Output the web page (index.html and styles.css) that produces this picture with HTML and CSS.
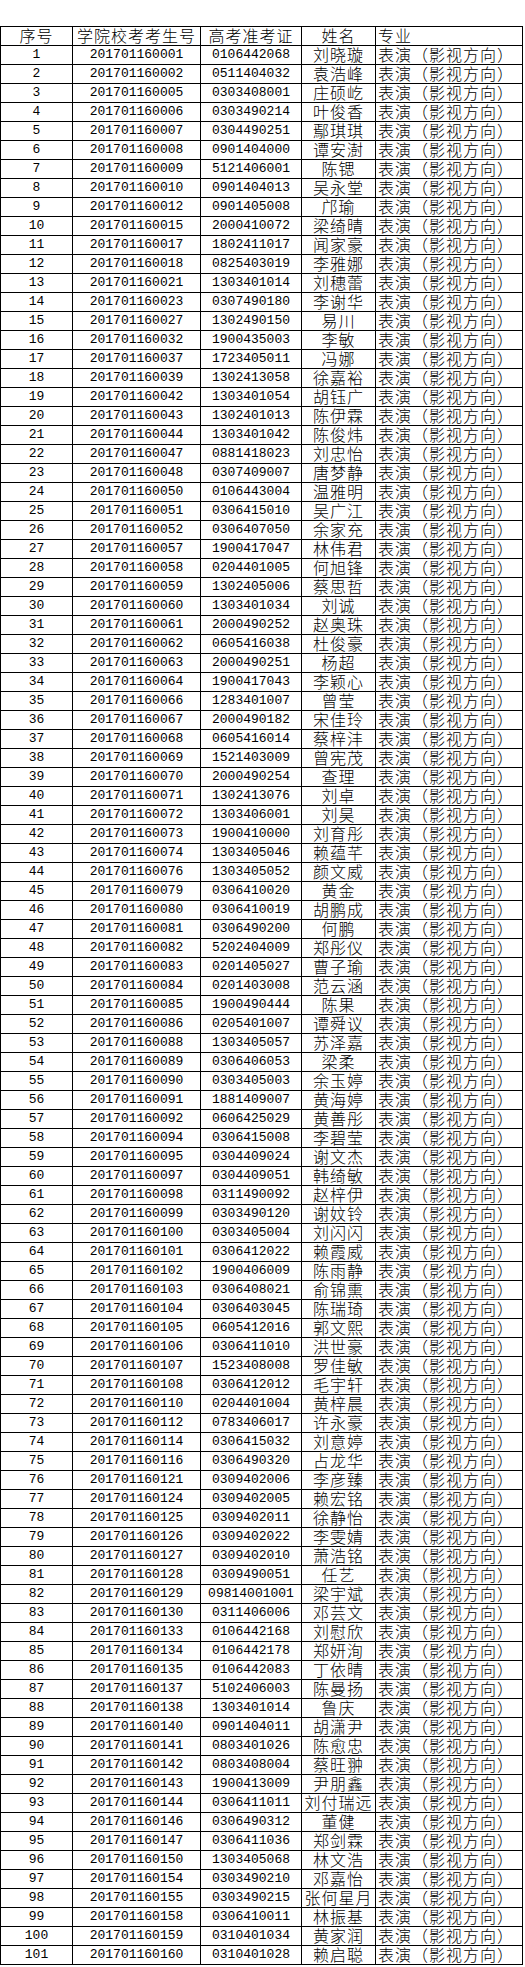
FILE: index.html
```html
<!DOCTYPE html>
<html lang="zh-CN">
<head>
<meta charset="utf-8">
<title>名单</title>
<link rel="stylesheet" href="styles.css">
</head>
<body>
<div class="sheet">
<div class="row head"><div class="c cn">序号</div><div class="c cn">学院校考考生号</div><div class="c cn">高考准考证</div><div class="c cn">姓名</div><div class="c cn left">专业</div></div>
<div class="row"><div class="c n">1</div><div class="c n">201701160001</div><div class="c n">0106442068</div><div class="c cn">刘晓璇</div><div class="c cn left">表演（影视方向）</div></div>
<div class="row"><div class="c n">2</div><div class="c n">201701160002</div><div class="c n">0511404032</div><div class="c cn">袁浩峰</div><div class="c cn left">表演（影视方向）</div></div>
<div class="row"><div class="c n">3</div><div class="c n">201701160005</div><div class="c n">0303408001</div><div class="c cn">庄硕屹</div><div class="c cn left">表演（影视方向）</div></div>
<div class="row"><div class="c n">4</div><div class="c n">201701160006</div><div class="c n">0303490214</div><div class="c cn">叶俊香</div><div class="c cn left">表演（影视方向）</div></div>
<div class="row"><div class="c n">5</div><div class="c n">201701160007</div><div class="c n">0304490251</div><div class="c cn">鄢琪琪</div><div class="c cn left">表演（影视方向）</div></div>
<div class="row"><div class="c n">6</div><div class="c n">201701160008</div><div class="c n">0901404000</div><div class="c cn">谭安澍</div><div class="c cn left">表演（影视方向）</div></div>
<div class="row"><div class="c n">7</div><div class="c n">201701160009</div><div class="c n">5121406001</div><div class="c cn">陈锶</div><div class="c cn left">表演（影视方向）</div></div>
<div class="row"><div class="c n">8</div><div class="c n">201701160010</div><div class="c n">0901404013</div><div class="c cn">吴永堂</div><div class="c cn left">表演（影视方向）</div></div>
<div class="row"><div class="c n">9</div><div class="c n">201701160012</div><div class="c n">0901405008</div><div class="c cn">邝瑜</div><div class="c cn left">表演（影视方向）</div></div>
<div class="row"><div class="c n">10</div><div class="c n">201701160015</div><div class="c n">2000410072</div><div class="c cn">梁绮晴</div><div class="c cn left">表演（影视方向）</div></div>
<div class="row"><div class="c n">11</div><div class="c n">201701160017</div><div class="c n">1802411017</div><div class="c cn">闻家豪</div><div class="c cn left">表演（影视方向）</div></div>
<div class="row"><div class="c n">12</div><div class="c n">201701160018</div><div class="c n">0825403019</div><div class="c cn">李雅娜</div><div class="c cn left">表演（影视方向）</div></div>
<div class="row"><div class="c n">13</div><div class="c n">201701160021</div><div class="c n">1303401014</div><div class="c cn">刘穗蕾</div><div class="c cn left">表演（影视方向）</div></div>
<div class="row"><div class="c n">14</div><div class="c n">201701160023</div><div class="c n">0307490180</div><div class="c cn">李谢华</div><div class="c cn left">表演（影视方向）</div></div>
<div class="row"><div class="c n">15</div><div class="c n">201701160027</div><div class="c n">1302490150</div><div class="c cn">易川</div><div class="c cn left">表演（影视方向）</div></div>
<div class="row"><div class="c n">16</div><div class="c n">201701160032</div><div class="c n">1900435003</div><div class="c cn">李敏</div><div class="c cn left">表演（影视方向）</div></div>
<div class="row"><div class="c n">17</div><div class="c n">201701160037</div><div class="c n">1723405011</div><div class="c cn">冯娜</div><div class="c cn left">表演（影视方向）</div></div>
<div class="row"><div class="c n">18</div><div class="c n">201701160039</div><div class="c n">1302413058</div><div class="c cn">徐嘉裕</div><div class="c cn left">表演（影视方向）</div></div>
<div class="row"><div class="c n">19</div><div class="c n">201701160042</div><div class="c n">1303401054</div><div class="c cn">胡钰广</div><div class="c cn left">表演（影视方向）</div></div>
<div class="row"><div class="c n">20</div><div class="c n">201701160043</div><div class="c n">1302401013</div><div class="c cn">陈伊霖</div><div class="c cn left">表演（影视方向）</div></div>
<div class="row"><div class="c n">21</div><div class="c n">201701160044</div><div class="c n">1303401042</div><div class="c cn">陈俊炜</div><div class="c cn left">表演（影视方向）</div></div>
<div class="row"><div class="c n">22</div><div class="c n">201701160047</div><div class="c n">0881418023</div><div class="c cn">刘忠怡</div><div class="c cn left">表演（影视方向）</div></div>
<div class="row"><div class="c n">23</div><div class="c n">201701160048</div><div class="c n">0307409007</div><div class="c cn">唐梦静</div><div class="c cn left">表演（影视方向）</div></div>
<div class="row"><div class="c n">24</div><div class="c n">201701160050</div><div class="c n">0106443004</div><div class="c cn">温雅明</div><div class="c cn left">表演（影视方向）</div></div>
<div class="row"><div class="c n">25</div><div class="c n">201701160051</div><div class="c n">0306415010</div><div class="c cn">吴广江</div><div class="c cn left">表演（影视方向）</div></div>
<div class="row"><div class="c n">26</div><div class="c n">201701160052</div><div class="c n">0306407050</div><div class="c cn">余家充</div><div class="c cn left">表演（影视方向）</div></div>
<div class="row"><div class="c n">27</div><div class="c n">201701160057</div><div class="c n">1900417047</div><div class="c cn">林伟君</div><div class="c cn left">表演（影视方向）</div></div>
<div class="row"><div class="c n">28</div><div class="c n">201701160058</div><div class="c n">0204401005</div><div class="c cn">何旭锋</div><div class="c cn left">表演（影视方向）</div></div>
<div class="row"><div class="c n">29</div><div class="c n">201701160059</div><div class="c n">1302405006</div><div class="c cn">蔡思哲</div><div class="c cn left">表演（影视方向）</div></div>
<div class="row"><div class="c n">30</div><div class="c n">201701160060</div><div class="c n">1303401034</div><div class="c cn">刘诚</div><div class="c cn left">表演（影视方向）</div></div>
<div class="row"><div class="c n">31</div><div class="c n">201701160061</div><div class="c n">2000490252</div><div class="c cn">赵奥珠</div><div class="c cn left">表演（影视方向）</div></div>
<div class="row"><div class="c n">32</div><div class="c n">201701160062</div><div class="c n">0605416038</div><div class="c cn">杜俊豪</div><div class="c cn left">表演（影视方向）</div></div>
<div class="row"><div class="c n">33</div><div class="c n">201701160063</div><div class="c n">2000490251</div><div class="c cn">杨超</div><div class="c cn left">表演（影视方向）</div></div>
<div class="row"><div class="c n">34</div><div class="c n">201701160064</div><div class="c n">1900417043</div><div class="c cn">李颖心</div><div class="c cn left">表演（影视方向）</div></div>
<div class="row"><div class="c n">35</div><div class="c n">201701160066</div><div class="c n">1283401007</div><div class="c cn">曾莹</div><div class="c cn left">表演（影视方向）</div></div>
<div class="row"><div class="c n">36</div><div class="c n">201701160067</div><div class="c n">2000490182</div><div class="c cn">宋佳玲</div><div class="c cn left">表演（影视方向）</div></div>
<div class="row"><div class="c n">37</div><div class="c n">201701160068</div><div class="c n">0605416014</div><div class="c cn">蔡梓沣</div><div class="c cn left">表演（影视方向）</div></div>
<div class="row"><div class="c n">38</div><div class="c n">201701160069</div><div class="c n">1521403009</div><div class="c cn">曾宪茂</div><div class="c cn left">表演（影视方向）</div></div>
<div class="row"><div class="c n">39</div><div class="c n">201701160070</div><div class="c n">2000490254</div><div class="c cn">查理</div><div class="c cn left">表演（影视方向）</div></div>
<div class="row"><div class="c n">40</div><div class="c n">201701160071</div><div class="c n">1302413076</div><div class="c cn">刘卓</div><div class="c cn left">表演（影视方向）</div></div>
<div class="row"><div class="c n">41</div><div class="c n">201701160072</div><div class="c n">1303406001</div><div class="c cn">刘昊</div><div class="c cn left">表演（影视方向）</div></div>
<div class="row"><div class="c n">42</div><div class="c n">201701160073</div><div class="c n">1900410000</div><div class="c cn">刘育彤</div><div class="c cn left">表演（影视方向）</div></div>
<div class="row"><div class="c n">43</div><div class="c n">201701160074</div><div class="c n">1303405046</div><div class="c cn">赖蕴芊</div><div class="c cn left">表演（影视方向）</div></div>
<div class="row"><div class="c n">44</div><div class="c n">201701160076</div><div class="c n">1303405052</div><div class="c cn">颜文威</div><div class="c cn left">表演（影视方向）</div></div>
<div class="row"><div class="c n">45</div><div class="c n">201701160079</div><div class="c n">0306410020</div><div class="c cn">黄金</div><div class="c cn left">表演（影视方向）</div></div>
<div class="row"><div class="c n">46</div><div class="c n">201701160080</div><div class="c n">0306410019</div><div class="c cn">胡鹏成</div><div class="c cn left">表演（影视方向）</div></div>
<div class="row"><div class="c n">47</div><div class="c n">201701160081</div><div class="c n">0306490200</div><div class="c cn">何鹏</div><div class="c cn left">表演（影视方向）</div></div>
<div class="row"><div class="c n">48</div><div class="c n">201701160082</div><div class="c n">5202404009</div><div class="c cn">郑彤仪</div><div class="c cn left">表演（影视方向）</div></div>
<div class="row"><div class="c n">49</div><div class="c n">201701160083</div><div class="c n">0201405027</div><div class="c cn">曹子瑜</div><div class="c cn left">表演（影视方向）</div></div>
<div class="row"><div class="c n">50</div><div class="c n">201701160084</div><div class="c n">0201403008</div><div class="c cn">范云涵</div><div class="c cn left">表演（影视方向）</div></div>
<div class="row"><div class="c n">51</div><div class="c n">201701160085</div><div class="c n">1900490444</div><div class="c cn">陈果</div><div class="c cn left">表演（影视方向）</div></div>
<div class="row"><div class="c n">52</div><div class="c n">201701160086</div><div class="c n">0205401007</div><div class="c cn">谭舜议</div><div class="c cn left">表演（影视方向）</div></div>
<div class="row"><div class="c n">53</div><div class="c n">201701160088</div><div class="c n">1303405057</div><div class="c cn">苏泽嘉</div><div class="c cn left">表演（影视方向）</div></div>
<div class="row"><div class="c n">54</div><div class="c n">201701160089</div><div class="c n">0306406053</div><div class="c cn">梁柔</div><div class="c cn left">表演（影视方向）</div></div>
<div class="row"><div class="c n">55</div><div class="c n">201701160090</div><div class="c n">0303405003</div><div class="c cn">余玉婷</div><div class="c cn left">表演（影视方向）</div></div>
<div class="row"><div class="c n">56</div><div class="c n">201701160091</div><div class="c n">1881409007</div><div class="c cn">黄海婷</div><div class="c cn left">表演（影视方向）</div></div>
<div class="row"><div class="c n">57</div><div class="c n">201701160092</div><div class="c n">0606425029</div><div class="c cn">黄善彤</div><div class="c cn left">表演（影视方向）</div></div>
<div class="row"><div class="c n">58</div><div class="c n">201701160094</div><div class="c n">0306415008</div><div class="c cn">李碧莹</div><div class="c cn left">表演（影视方向）</div></div>
<div class="row"><div class="c n">59</div><div class="c n">201701160095</div><div class="c n">0304409024</div><div class="c cn">谢文杰</div><div class="c cn left">表演（影视方向）</div></div>
<div class="row"><div class="c n">60</div><div class="c n">201701160097</div><div class="c n">0304409051</div><div class="c cn">韩绮敏</div><div class="c cn left">表演（影视方向）</div></div>
<div class="row"><div class="c n">61</div><div class="c n">201701160098</div><div class="c n">0311490092</div><div class="c cn">赵梓伊</div><div class="c cn left">表演（影视方向）</div></div>
<div class="row"><div class="c n">62</div><div class="c n">201701160099</div><div class="c n">0303490120</div><div class="c cn">谢妏铃</div><div class="c cn left">表演（影视方向）</div></div>
<div class="row"><div class="c n">63</div><div class="c n">201701160100</div><div class="c n">0303405004</div><div class="c cn">刘闪闪</div><div class="c cn left">表演（影视方向）</div></div>
<div class="row"><div class="c n">64</div><div class="c n">201701160101</div><div class="c n">0306412022</div><div class="c cn">赖霞威</div><div class="c cn left">表演（影视方向）</div></div>
<div class="row"><div class="c n">65</div><div class="c n">201701160102</div><div class="c n">1900406009</div><div class="c cn">陈雨静</div><div class="c cn left">表演（影视方向）</div></div>
<div class="row"><div class="c n">66</div><div class="c n">201701160103</div><div class="c n">0306408021</div><div class="c cn">俞锦熏</div><div class="c cn left">表演（影视方向）</div></div>
<div class="row"><div class="c n">67</div><div class="c n">201701160104</div><div class="c n">0306403045</div><div class="c cn">陈瑞琦</div><div class="c cn left">表演（影视方向）</div></div>
<div class="row"><div class="c n">68</div><div class="c n">201701160105</div><div class="c n">0605412016</div><div class="c cn">郭文熙</div><div class="c cn left">表演（影视方向）</div></div>
<div class="row"><div class="c n">69</div><div class="c n">201701160106</div><div class="c n">0306411010</div><div class="c cn">洪世豪</div><div class="c cn left">表演（影视方向）</div></div>
<div class="row"><div class="c n">70</div><div class="c n">201701160107</div><div class="c n">1523408008</div><div class="c cn">罗佳敏</div><div class="c cn left">表演（影视方向）</div></div>
<div class="row"><div class="c n">71</div><div class="c n">201701160108</div><div class="c n">0306412012</div><div class="c cn">毛宇轩</div><div class="c cn left">表演（影视方向）</div></div>
<div class="row"><div class="c n">72</div><div class="c n">201701160110</div><div class="c n">0204401004</div><div class="c cn">黄梓晨</div><div class="c cn left">表演（影视方向）</div></div>
<div class="row"><div class="c n">73</div><div class="c n">201701160112</div><div class="c n">0783406017</div><div class="c cn">许永豪</div><div class="c cn left">表演（影视方向）</div></div>
<div class="row"><div class="c n">74</div><div class="c n">201701160114</div><div class="c n">0306415032</div><div class="c cn">刘意婷</div><div class="c cn left">表演（影视方向）</div></div>
<div class="row"><div class="c n">75</div><div class="c n">201701160116</div><div class="c n">0306490320</div><div class="c cn">占龙华</div><div class="c cn left">表演（影视方向）</div></div>
<div class="row"><div class="c n">76</div><div class="c n">201701160121</div><div class="c n">0309402006</div><div class="c cn">李彦臻</div><div class="c cn left">表演（影视方向）</div></div>
<div class="row"><div class="c n">77</div><div class="c n">201701160124</div><div class="c n">0309402005</div><div class="c cn">赖宏铭</div><div class="c cn left">表演（影视方向）</div></div>
<div class="row"><div class="c n">78</div><div class="c n">201701160125</div><div class="c n">0309402011</div><div class="c cn">徐静怡</div><div class="c cn left">表演（影视方向）</div></div>
<div class="row"><div class="c n">79</div><div class="c n">201701160126</div><div class="c n">0309402022</div><div class="c cn">李雯婧</div><div class="c cn left">表演（影视方向）</div></div>
<div class="row"><div class="c n">80</div><div class="c n">201701160127</div><div class="c n">0309402010</div><div class="c cn">萧浩铭</div><div class="c cn left">表演（影视方向）</div></div>
<div class="row"><div class="c n">81</div><div class="c n">201701160128</div><div class="c n">0309490051</div><div class="c cn">任艺</div><div class="c cn left">表演（影视方向）</div></div>
<div class="row"><div class="c n">82</div><div class="c n">201701160129</div><div class="c n">09814001001</div><div class="c cn">梁宇斌</div><div class="c cn left">表演（影视方向）</div></div>
<div class="row"><div class="c n">83</div><div class="c n">201701160130</div><div class="c n">0311406006</div><div class="c cn">邓芸文</div><div class="c cn left">表演（影视方向）</div></div>
<div class="row"><div class="c n">84</div><div class="c n">201701160133</div><div class="c n">0106442168</div><div class="c cn">刘慰欣</div><div class="c cn left">表演（影视方向）</div></div>
<div class="row"><div class="c n">85</div><div class="c n">201701160134</div><div class="c n">0106442178</div><div class="c cn">郑妍洵</div><div class="c cn left">表演（影视方向）</div></div>
<div class="row"><div class="c n">86</div><div class="c n">201701160135</div><div class="c n">0106442083</div><div class="c cn">丁依晴</div><div class="c cn left">表演（影视方向）</div></div>
<div class="row"><div class="c n">87</div><div class="c n">201701160137</div><div class="c n">5102406003</div><div class="c cn">陈曼扬</div><div class="c cn left">表演（影视方向）</div></div>
<div class="row"><div class="c n">88</div><div class="c n">201701160138</div><div class="c n">1303401014</div><div class="c cn">鲁庆</div><div class="c cn left">表演（影视方向）</div></div>
<div class="row"><div class="c n">89</div><div class="c n">201701160140</div><div class="c n">0901404011</div><div class="c cn">胡潇尹</div><div class="c cn left">表演（影视方向）</div></div>
<div class="row"><div class="c n">90</div><div class="c n">201701160141</div><div class="c n">0803401026</div><div class="c cn">陈愈忠</div><div class="c cn left">表演（影视方向）</div></div>
<div class="row"><div class="c n">91</div><div class="c n">201701160142</div><div class="c n">0803408004</div><div class="c cn">蔡旺翀</div><div class="c cn left">表演（影视方向）</div></div>
<div class="row"><div class="c n">92</div><div class="c n">201701160143</div><div class="c n">1900413009</div><div class="c cn">尹朋鑫</div><div class="c cn left">表演（影视方向）</div></div>
<div class="row"><div class="c n">93</div><div class="c n">201701160144</div><div class="c n">0306411011</div><div class="c cn">刘付瑞远</div><div class="c cn left">表演（影视方向）</div></div>
<div class="row"><div class="c n">94</div><div class="c n">201701160146</div><div class="c n">0306490312</div><div class="c cn">董健</div><div class="c cn left">表演（影视方向）</div></div>
<div class="row"><div class="c n">95</div><div class="c n">201701160147</div><div class="c n">0306411036</div><div class="c cn">郑剑霖</div><div class="c cn left">表演（影视方向）</div></div>
<div class="row"><div class="c n">96</div><div class="c n">201701160150</div><div class="c n">1303405068</div><div class="c cn">林文浩</div><div class="c cn left">表演（影视方向）</div></div>
<div class="row"><div class="c n">97</div><div class="c n">201701160154</div><div class="c n">0303490210</div><div class="c cn">邓嘉怡</div><div class="c cn left">表演（影视方向）</div></div>
<div class="row"><div class="c n">98</div><div class="c n">201701160155</div><div class="c n">0303490215</div><div class="c cn">张何星月</div><div class="c cn left">表演（影视方向）</div></div>
<div class="row"><div class="c n">99</div><div class="c n">201701160158</div><div class="c n">0306410011</div><div class="c cn">林振基</div><div class="c cn left">表演（影视方向）</div></div>
<div class="row"><div class="c n">100</div><div class="c n">201701160159</div><div class="c n">0310401034</div><div class="c cn">黄家润</div><div class="c cn left">表演（影视方向）</div></div>
<div class="row"><div class="c n">101</div><div class="c n">201701160160</div><div class="c n">0310401028</div><div class="c cn">赖启聪</div><div class="c cn left">表演（影视方向）</div></div>
</div>
</body>
</html>
```
FILE: styles.css
```css
html, body {
  margin: 0;
  padding: 0;
  background: #ffffff;
}

body {
  padding-top: 26px;
  color: #000000;
}

.sheet {
  width: 521px;
  display: flex;
  flex-direction: column;
  gap: 1px;
  background: #000000;
  border: 1px solid #000000;
}

.row {
  display: grid;
  grid-template-columns: 71px 127px 100px 73px 146px;
  column-gap: 1px;
  height: 18px;
}

.c {
  background: #ffffff;
  height: 18px;
  line-height: 18px;
  text-align: center;
  white-space: nowrap;
  overflow: visible;
}

.n {
  font-family: "Liberation Mono", "DejaVu Sans Mono", monospace;
  font-size: 13px;
}

.cn {
  box-sizing: border-box;
  padding-top: 2px;
  line-height: 16px;
  font-family: "Liberation Sans", "Noto Sans CJK SC", sans-serif;
  font-size: 16px;
  font-weight: 300;
  letter-spacing: 1px;
}

.left {
  text-align: left;
  padding-left: 2px;
}
```
